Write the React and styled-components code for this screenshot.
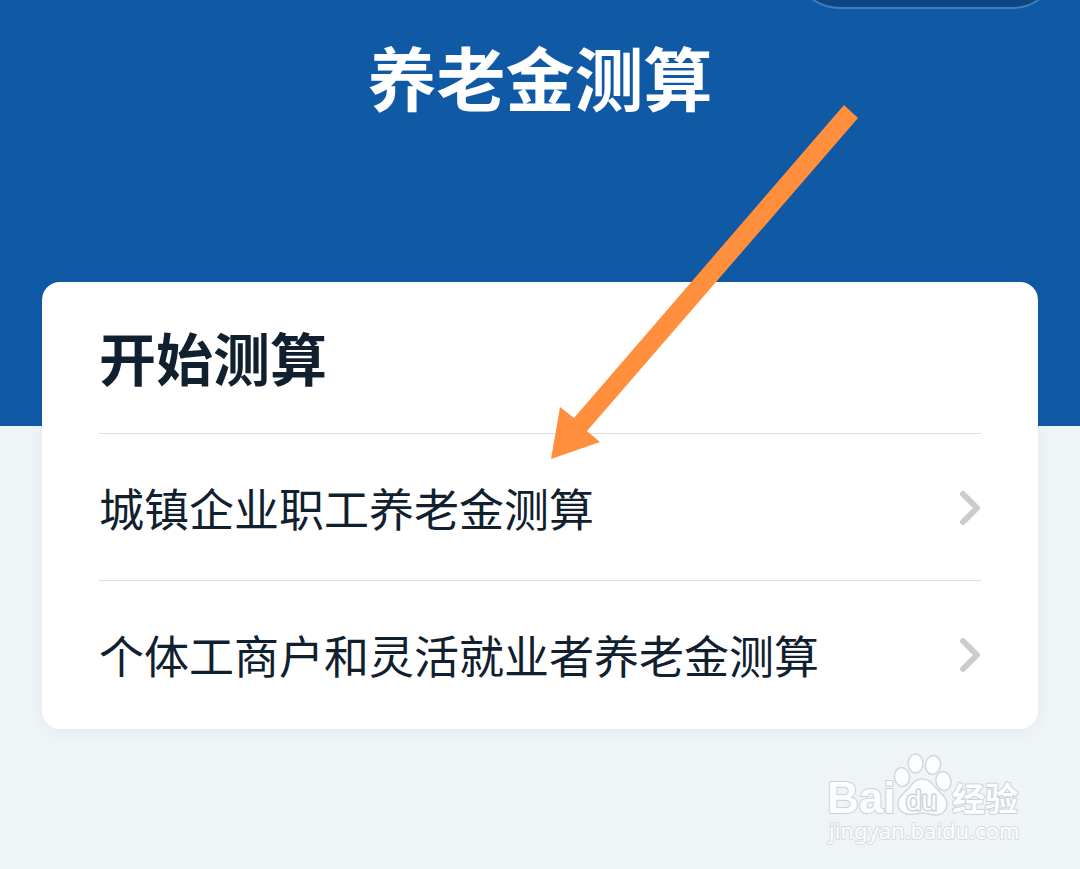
import React from "react";
import styled, { createGlobalStyle } from "styled-components";

const items = ["城镇企业职工养老金测算", "个体工商户和灵活就业者养老金测算"];

function CalculatorLink({ title }) {
  return (
    <Item>
      <ItemLink href="#">
        {title}
        <Chevron viewBox="0 0 22 36" aria-hidden="true">
          <path d="M4 4 L18 18 L4 32" />
        </Chevron>
      </ItemLink>
    </Item>
  );
}

function BaiduWatermark() {
  return (
    <Watermark viewBox="0 0 200 100" role="img" aria-label="Baidu 经验">
      <g fill="#fbfdfe" stroke="#d3d7da" strokeWidth="1.5">
        <ellipse cx="76" cy="34" rx="7.5" ry="9.5" transform="rotate(-10 76 34)" />
        <ellipse cx="89.5" cy="20.5" rx="7.5" ry="9.5" />
        <ellipse cx="107" cy="22" rx="7.5" ry="9.5" transform="rotate(10 107 22)" />
        <ellipse cx="117.5" cy="38" rx="7.5" ry="9.5" transform="rotate(-12 117.5 38)" />
        <path d="M96 36 C88 36 86 42 82 46 C77 51 72 54 72 61 C72 68 78 71.5 84 71.5 C90 71.5 92 70 96 70 C100 70 104 72 110 72 C117 72 121 67 121 60 C120 53 114 50 110 45 C106 40 103 36 96 36 Z" />
      </g>
      <BrandText x="1" y="70" $size={44}>
        Bai
      </BrandText>
      <BrandText x="80" y="67" $size={28} $thin>
        du
      </BrandText>
      <BrandText x="126" y="68" $size={33}>
        经验
      </BrandText>
      <SiteText x="3" y="96">
        jingyan.baidu.com
      </SiteText>
    </Watermark>
  );
}

function App() {
  return (
    <Page>
      <GlobalStyle />
      <Header>
        <Capsule />
        <PageTitle>养老金测算</PageTitle>
      </Header>
      <Card>
        <CardTitle>开始测算</CardTitle>
        <List>
          {items.map((title) => (
            <CalculatorLink key={title} title={title} />
          ))}
        </List>
      </Card>
      <Footer>
        <BaiduWatermark />
      </Footer>
      <Arrow viewBox="0 0 310 356" aria-hidden="true">
        <path d="M293 0 L307 13 L36 326 L49 337 L0 354 L9 302 L23 313 Z" />
      </Arrow>
    </Page>
  );
}

export default App;

const GlobalStyle = createGlobalStyle`
  * {
    box-sizing: border-box;
  }

  body {
    margin: 0;
    background: #eff4f7;
    color: #10202f;
    font-family: "Noto Sans CJK SC", sans-serif;
  }
`;

const Page = styled.div`
  position: relative;
  overflow: hidden;
`;

const Header = styled.header`
  // the card is pulled up over the bottom of this area
  position: relative;
  padding: 26px 42px 300px;
  background: #1059a5;
`;

const Capsule = styled.div`
  // mini program menu, mostly scrolled out of view
  position: absolute;
  top: -88px;
  right: 20px;
  width: 268px;
  height: 97px;
  border: 2px solid #3f7dbd;
  border-radius: 48px;
  background: #0f4580;
`;

const PageTitle = styled.h1`
  margin: 0;
  color: #fff;
  font-size: 69px;
  font-weight: 700;
  line-height: 100px;
  text-align: center;
`;

const Card = styled.main`
  position: relative;
  margin: -144px 42px 0;
  padding: 0 57px 2px;
  border-radius: 18px;
  background: #fff;
  box-shadow: 0 2px 16px rgba(16, 60, 80, 0.06);
`;

const CardTitle = styled.h2`
  margin: 0;
  padding: 34px 0 37px;
  font-size: 57px;
  font-weight: 700;
  line-height: 80px;
`;

const List = styled.ul`
  margin: 0;
  padding: 0;
  list-style: none;
`;

const Item = styled.li`
  border-top: 1px solid #dcdfe1;
`;

const ItemLink = styled.a`
  display: flex;
  align-items: center;
  justify-content: space-between;
  padding: 41px 0 39px;
  color: inherit;
  font-size: 45px;
  line-height: 66px;
  text-decoration: none;
`;

const Chevron = styled.svg`
  flex: none;
  width: 22px;
  height: 36px;
  fill: none;
  stroke: #ccc;
  stroke-width: 6;
  stroke-linecap: round;
  stroke-linejoin: round;
`;

const Footer = styled.footer`
  display: flex;
  justify-content: flex-end;
  padding: 14px 54px 24px;
`;

const Watermark = styled.svg`
  width: 200px;
  height: 100px;
  overflow: visible;
`;

const BrandText = styled.text`
  fill: #fbfdfe;
  stroke: #cdd1d4;
  stroke-width: ${(props) => (props.$thin ? 3 : 2)};
  stroke-linejoin: round;
  paint-order: stroke;
  font-family: "Liberation Sans", "Noto Sans CJK SC", sans-serif;
  font-size: ${(props) => props.$size}px;
  font-weight: ${(props) => (props.$thin ? 400 : 700)};
`;

const SiteText = styled.text`
  fill: #fbfdfe;
  stroke: #d8dcdf;
  stroke-width: 2;
  stroke-linejoin: round;
  paint-order: stroke;
  font-family: "Noto Sans", sans-serif;
  font-size: 22px;
`;

const Arrow = styled.svg`
  // points at the first link, drawn over the header and the card
  position: absolute;
  top: 105px;
  left: calc(50% + 11px);
  width: 310px;
  height: 356px;
  fill: #ff8f3c;
  pointer-events: none;
`;
